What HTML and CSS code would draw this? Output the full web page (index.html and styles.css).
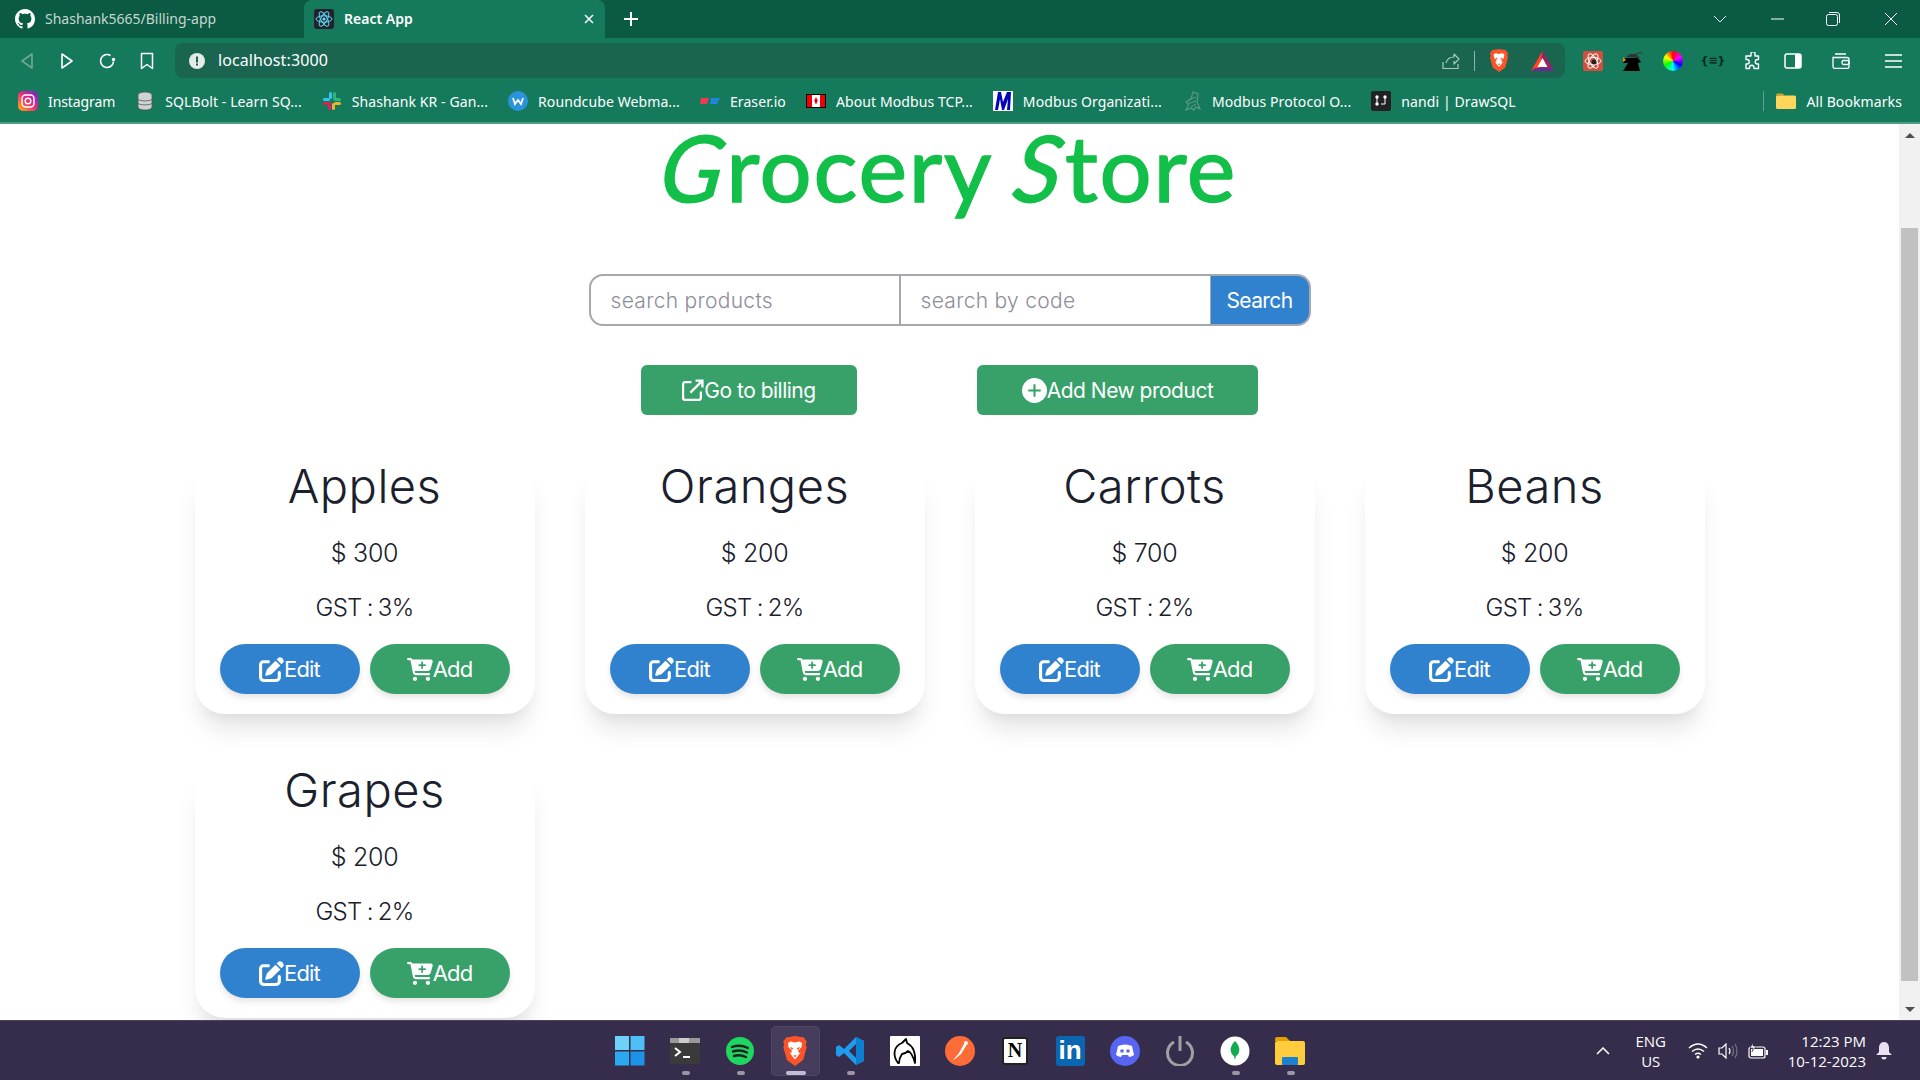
FILE: index.html
```html
<!DOCTYPE html>
<html lang="en">
<head>
    <meta charset="UTF-8">
    <title>React App</title>
    <link rel="stylesheet" href="styles.css">
</head>
<body>
    <svg class="defs" aria-hidden="true">
        <symbol id="i-edit" viewBox="0 0 512 512"><path fill="#fff" d="M471.6 21.7c-21.9-21.9-57.3-21.9-79.2 0L362.3 51.7l97.9 97.9 30.1-30.1c21.9-21.9 21.9-57.3 0-79.2L471.6 21.7zm-299.2 220c-6.1 6.1-10.8 13.6-13.5 21.9l-29.6 88.8c-2.9 8.6-.6 18.1 5.8 24.6s15.9 8.7 24.6 5.8l88.8-29.6c8.2-2.7 15.7-7.4 21.9-13.5L437.7 172.3 339.7 74.3 172.4 241.7zM96 64C43 64 0 107 0 160V416c0 53 43 96 96 96H352c53 0 96-43 96-96V320c0-17.7-14.3-32-32-32s-32 14.3-32 32v96c0 17.7-14.3 32-32 32H96c-17.7 0-32-14.3-32-32V160c0-17.7 14.3-32 32-32h96c17.7 0 32-14.3 32-32s-14.3-32-32-32H96z"/></symbol>
        <symbol id="i-cart" viewBox="0 0 576 512"><path fill="#fff" d="M0 24C0 10.7 10.7 0 24 0H69.5c22 0 41.5 12.8 50.6 32h411c26.3 0 45.5 25 38.6 50.4l-41 152.3c-8.5 31.4-37 53.3-69.5 53.3H170.7l5.4 28.5c2.2 11.3 12.1 19.5 23.6 19.5H488c13.3 0 24 10.7 24 24s-10.7 24-24 24H199.7c-34.6 0-64.3-24.6-70.7-58.5L77.4 54.5c-.7-3.8-4-6.5-7.9-6.5H24C10.7 48 0 37.3 0 24zM128 464a48 48 0 1 1 96 0 48 48 0 1 1 -96 0zm336-48a48 48 0 1 1 0 96 48 48 0 1 1 0-96zM252 160c0 11 9 20 20 20h44v44c0 11 9 20 20 20s20-9 20-20V180h44c11 0 20-9 20-20s-9-20-20-20H356V96c0-11-9-20-20-20s-20 9-20 20v44H272c-11 0-20 9-20 20z"/></symbol>
        <symbol id="i-brave" viewBox="0 0 24 28"><path fill="#fb542b" d="M12 0l5 1 3 .2 3 4-1 3 1 2-3.400 12.300L12 28l-7.600-5.500L1 10.200l1-2-1-3 3-4L7 1z"/><path fill="#fff" d="M12 6l4-.8 2.500 1.300-.5 4-3 3 .5 2.500 2-1-3 4-2.500 3-2.500-3-3-4 2 1 .5-2.500-3-3-.5-4L8 5.200z"/><path fill="#fb542b" d="M7.500 10l3 1.500L9 13zM16.500 10l-3 1.500L15 13zM10.500 18h3L12 20z"/></symbol>
    </svg>

    <div class="tabstrip">
        <div class="tab">
            <svg width="20" height="20" viewBox="0 0 16 16"><path fill="#fff" d="M8 0C3.580 0 0 3.580 0 8c0 3.540 2.290 6.530 5.470 7.590.4.070.55-.17.55-.38 0-.19-.01-.82-.01-1.490-2.010.37-2.530-.49-2.690-.94-.09-.23-.48-.94-.82-1.130-.28-.15-.68-.52-.01-.53.63-.01 1.080.58 1.230.82.72 1.210 1.870.87 2.330.66.070-.52.28-.87.51-1.070-1.780-.2-3.640-.89-3.640-3.950 0-.87.31-1.590.82-2.150-.08-.2-.36-1.020.08-2.120 0 0 .67-.21 2.200.82.64-.18 1.320-.27 2-.27.68 0 1.360.09 2 .27 1.530-1.040 2.200-.82 2.200-.82.44 1.100.16 1.920.08 2.120.51.56.82 1.270.82 2.150 0 3.070-1.870 3.750-3.650 3.950.29.25.54.73.54 1.480 0 1.070-.01 1.930-.01 2.200 0 .21.15.46.55.38A8.013 8.013 0 0016 8c0-4.420-3.580-8-8-8z"/></svg>
            <span class="tab-title">Shashank5665/Billing-app</span>
        </div>
        <div class="tab tab-active">
            <svg width="20" height="20" viewBox="0 0 20 20"><rect width="20" height="20" rx="3" fill="#20232a"/><g fill="none" stroke="#61dafb" stroke-width="1"><ellipse cx="10" cy="10" rx="8" ry="3.200"/><ellipse cx="10" cy="10" rx="8" ry="3.200" transform="rotate(60 10 10)"/><ellipse cx="10" cy="10" rx="8" ry="3.200" transform="rotate(120 10 10)"/></g><circle cx="10" cy="10" r="1.600" fill="#61dafb"/></svg>
            <span class="tab-title">React App</span>
            <svg class="tab-close" width="10" height="10" viewBox="0 0 10 10"><path d="M1 1l8 8M9 1l-8 8" stroke="#fff" stroke-width="1.500"/></svg>
        </div>
        <svg class="new-tab" width="16" height="16" viewBox="0 0 16 16"><path d="M8 1v14M1 8h14" stroke="#fff" stroke-width="2"/></svg>
        <div class="window-btns">
            <svg class="win-list" width="14" height="8" viewBox="0 0 14 8"><path d="M1 1l6 6 6-6" fill="none" stroke="#dfe" stroke-width="1"/></svg>
            <svg class="win-min" width="13" height="2" viewBox="0 0 13 2"><path d="M0 1h13" stroke="#fff" stroke-width="1"/></svg>
            <svg class="win-max" width="14" height="14" viewBox="0 0 14 14"><rect x=".5" y="2.500" width="11" height="11" rx="2" fill="none" stroke="#fff"/><path d="M3 .5h8a2.500 2.500 0 0 1 2.500 2.500v8" fill="none" stroke="#fff"/></svg>
            <svg class="win-close" width="14" height="14" viewBox="0 0 14 14"><path d="M1 1l12 12M13 1L1 13" stroke="#fff" stroke-width="1"/></svg>
        </div>
    </div>

    <div class="toolbar">
        <span class="nav-btn"><svg width="14" height="18" viewBox="0 0 14 18"><path d="M12 2L2 9l10 7z" fill="none" stroke="#6fa895" stroke-width="1.600" stroke-linejoin="round"/></svg></span>
        <span class="nav-btn"><svg width="14" height="18" viewBox="0 0 14 18"><path d="M2 2l10 7-10 7z" fill="none" stroke="#fff" stroke-width="1.600" stroke-linejoin="round"/></svg></span>
        <span class="nav-btn"><svg width="18" height="18" viewBox="0 0 18 18"><path d="M12.500 3.500A6.500 6.500 0 1 0 15.500 9.500" fill="none" stroke="#fff" stroke-width="1.600"/><circle cx="15.500" cy="7.500" r="1.700" fill="#fff"/></svg></span>
        <span class="nav-btn"><svg width="14" height="18" viewBox="0 0 14 18"><path d="M1.500 1.500h11v15L7 12.500l-5.500 4z" fill="none" stroke="#fff" stroke-width="1.500" stroke-linejoin="round"/></svg></span>
        <div class="urlbar">
            <svg width="16" height="16" viewBox="0 0 16 16"><circle cx="8" cy="8" r="8" fill="#e4ebe8"/><rect x="7" y="3.500" width="2" height="6" fill="#196550"/><rect x="7" y="10.500" width="2" height="2" fill="#196550"/></svg>
            <span class="url">localhost:3000</span>
            <svg class="url-share" width="18" height="18" viewBox="0 0 18 18"><path d="M1 10v6.500h15V12M4 11c1-4 4-6 8-6V2l5 5-5 5V9" fill="none" stroke="#a9c8bc" stroke-width="1.200" stroke-linejoin="round"/></svg>
            <span class="url-sep"></span>
            <svg class="url-brave" width="20" height="23"><use href="#i-brave"/></svg>
            <svg class="url-bat" width="23" height="20" viewBox="0 0 23 20"><path d="M11.500 0L23 20H0z" fill="#9e1f63"/><path d="M11.500 0L0 20h8z" fill="#ff4724"/><path d="M0 20h23l-4-3H4z" fill="#662d91"/><path d="M11.500 7l5 9h-10z" fill="#fff"/></svg>
        </div>
        <div class="tool-icons">
            <span class="nav-btn"><svg width="20" height="20" viewBox="0 0 20 20"><rect width="20" height="20" rx="2" fill="#d0503f"/><g fill="none" stroke="#fff" stroke-width="1"><ellipse cx="10" cy="10" rx="8" ry="3.500"/><ellipse cx="10" cy="10" rx="8" ry="3.500" transform="rotate(60 10 10)"/><ellipse cx="10" cy="10" rx="8" ry="3.500" transform="rotate(120 10 10)"/></g><circle cx="11" cy="11" r="2.500" fill="#222"/></svg></span>
            <span class="nav-btn"><svg width="22" height="20" viewBox="0 0 22 20"><path d="M3 7h13l3 4-3 1 2 8H1l5-8H1z" fill="#000"/><path d="M1 6l3 3-3 2z" fill="#e98a15"/><path d="M4 6l4-3h6l4 4z" fill="#333"/><path d="M14 3q3-2 6-1" fill="none" stroke="#333"/></svg></span>
            <span class="nav-btn"><span class="color-wheel"></span></span>
            <span class="nav-btn"><span class="ext-brace">{≡}</span></span>
            <span class="nav-btn"><svg width="18" height="18" viewBox="0 0 18 18"><path d="M7 1.500a2 2 0 0 1 4 0.500V4h3.500v3.500h-1a2.200 2.200 0 0 0 0 4.500h1v4.500H10v-1a2.200 2.200 0 0 0-4.500 0v1H2V12h1a2.200 2.200 0 0 0 0-4.500H2V4h5z" fill="none" stroke="#fff" stroke-width="1.400" stroke-linejoin="round"/></svg></span>
            <span class="nav-btn"><svg width="18" height="16" viewBox="0 0 18 16"><rect x="1" y="1" width="16" height="14" rx="2" fill="none" stroke="#fff" stroke-width="1.500"/><rect x="11" y="1" width="6" height="14" fill="#fff"/></svg></span>
            <span class="nav-btn nav-wallet"><svg width="18" height="16" viewBox="0 0 18 16"><path d="M3 1h11M1 4.500h14a2 2 0 0 1 2 2v7a2 2 0 0 1-2 2H3a2 2 0 0 1-2-2z" fill="none" stroke="#fff" stroke-width="1.300"/><rect x="10" y="7.500" width="7" height="4" rx="1.500" fill="none" stroke="#fff" stroke-width="1.300"/></svg></span>
            <span class="nav-btn nav-menu"><svg width="17" height="14" viewBox="0 0 17 14"><path d="M0 1h17M0 7h17M0 13h17" stroke="#fff" stroke-width="1.500"/></svg></span>
        </div>
    </div>

    <div class="bookmarks">
        <span class="bookmark bookmark-first">
            <svg width="20" height="20" viewBox="0 0 20 20"><defs><linearGradient id="ig" x1="0" y1="1" x2="1" y2="0"><stop offset="0" stop-color="#fdb900"/><stop offset=".5" stop-color="#ee2a7b"/><stop offset="1" stop-color="#6228d7"/></linearGradient></defs><rect width="20" height="20" rx="5" fill="url(#ig)"/><rect x="4" y="4" width="12" height="12" rx="3.500" fill="none" stroke="#fff" stroke-width="1.400"/><circle cx="10" cy="10" r="2.800" fill="none" stroke="#fff" stroke-width="1.400"/></svg>
            Instagram</span>
        <span class="bookmark">
            <svg width="20" height="20" viewBox="0 0 20 20"><path d="M3 4c0-4 14-4 14 0v12c0 4-14 4-14 0z" fill="#cfd3d6" stroke="#555" stroke-width=".8"/><path d="M3 8c0 2.500 14 2.500 14 0M3 12c0 2.500 14 2.500 14 0" fill="none" stroke="#555" stroke-width=".8"/></svg>
            SQLBolt - Learn SQ...</span>
        <span class="bookmark">
            <svg width="20" height="20" viewBox="0 0 20 20"><rect x="7" y="1" width="3" height="7" rx="1.500" fill="#36c5f0"/><rect x="1" y="7" width="7" height="3" rx="1.500" fill="#36c5f0"/><rect x="11" y="1" width="3" height="8" rx="1.500" fill="#2eb67d"/><rect x="12" y="7" width="7" height="3" rx="1.500" fill="#2eb67d"/><rect x="12" y="11" width="7" height="3" rx="1.500" fill="#ecb22e"/><rect x="10" y="12" width="3" height="7" rx="1.500" fill="#ecb22e"/><rect x="1" y="11" width="8" height="3" rx="1.500" fill="#e01e5a"/><rect x="6" y="12" width="3" height="7" rx="1.500" fill="#e01e5a"/></svg>
            Shashank KR - Gan...</span>
        <span class="bookmark">
            <svg width="20" height="20" viewBox="0 0 20 20"><circle cx="10" cy="10" r="10" fill="#2a93d9"/><path d="M5 7l2 6 3-4 3 4 2-6" fill="none" stroke="#fff" stroke-width="1.800"/></svg>
            Roundcube Webma...</span>
        <span class="bookmark">
            <svg width="20" height="20" viewBox="0 0 20 20"><path d="M1 7h8l-2 6H0z" fill="#ef3b4f"/><path d="M11 7h9l-3 6h-7z" fill="#1f86e0"/></svg>
            Eraser.io</span>
        <span class="bookmark">
            <svg width="20" height="20" viewBox="0 0 20 20"><rect y="3" width="20" height="14" fill="#000"/><rect x="1" y="4" width="18" height="12" fill="#e00"/><rect x="6" y="4" width="8" height="12" fill="#fff"/><path d="M10 6l2 4-1 .5v2H9v-2L8 10z" fill="#e00"/></svg>
            About Modbus TCP...</span>
        <span class="bookmark">
            <svg width="20" height="20" viewBox="0 0 20 20"><rect width="20" height="20" fill="#fff"/><path d="M2 19L5 1h3l2 10 4-10h4l-1 18h-3l1-11-4 11H9L7 8 5 19z" fill="#0505b8"/></svg>
            Modbus Organizati...</span>
        <span class="bookmark">
            <svg width="20" height="20" viewBox="0 0 20 20"><path d="M11 1l5 2-1 8 3 7-4-2-2 3-3-2-5 2 3-6-3-2 5-3z" fill="none" stroke="#5a9a85" stroke-width="1.200"/><path d="M6 9l8-3M5 13l9-3M9 16l5-3" stroke="#5a9a85"/></svg>
            Modbus Protocol O...</span>
        <span class="bookmark">
            <svg width="20" height="20" viewBox="0 0 20 20"><rect width="20" height="20" rx="2" fill="#222"/><circle cx="6" cy="6" r="1.700" fill="#fff"/><circle cx="14" cy="6" r="1.700" fill="#fff"/><circle cx="6" cy="13" r="1.700" fill="#fff"/><path d="M14 7v6h-4" fill="none" stroke="#fff"/><path d="M6 7v5" stroke="#fff"/></svg>
            nandi | DrawSQL</span>
        <span class="bookmark-sep"></span>
        <span class="bookmark">
            <svg width="20" height="16" viewBox="0 0 20 16"><path d="M0 2a1.500 1.500 0 0 1 1.500-1.500h5L9 2.500H0z" fill="#d49f22"/><rect y="2.500" width="20" height="13.500" rx="1.500" fill="#ffd65c"/></svg>
            All Bookmarks</span>
    </div>

    <div class="viewport">
        <main class="page">
            <h1 class="store-title"><span class="swash">G</span>rocery <span class="swash">S</span>tore</h1>

            <form class="search-row">
                <input class="search-input search-first" type="text" placeholder="search products">
                <input class="search-input" type="text" placeholder="search by code">
                <button class="search-btn" type="button">Search</button>
            </form>

            <div class="actions">
                <button class="action-btn action-billing" type="button">
                    <svg width="22" height="22" viewBox="0 0 21 21"><path d="M9 3H3a2 2 0 0 0-2 2v13a2 2 0 0 0 2 2h13a2 2 0 0 0 2-2v-6" fill="none" stroke="#fff" stroke-width="2.200"/><path d="M8 13L19 2M13 1.500h6.500V8" fill="none" stroke="#fff" stroke-width="2.200"/></svg>Go to billing</button>
                <button class="action-btn action-add" type="button">
                    <svg width="25" height="25" viewBox="0 0 24 24"><circle cx="12" cy="12" r="12" fill="#fff"/><path d="M12 6v12M6 12h12" stroke="#38a169" stroke-width="2"/></svg>Add New product</button>
            </div>

            <section class="cards">
                <article class="card">
                    <h2 class="card-name">Apples</h2>
                    <p class="card-price">$ 300</p>
                    <p class="card-gst">GST : 3%</p>
                    <div class="card-btns">
                        <button class="pill pill-edit" type="button"><svg class="i-edit"><use href="#i-edit"/></svg>Edit</button>
                        <button class="pill pill-add" type="button"><svg class="i-cart"><use href="#i-cart"/></svg>Add</button>
                    </div>
                </article>
                <article class="card">
                    <h2 class="card-name">Oranges</h2>
                    <p class="card-price">$ 200</p>
                    <p class="card-gst">GST : 2%</p>
                    <div class="card-btns">
                        <button class="pill pill-edit" type="button"><svg class="i-edit"><use href="#i-edit"/></svg>Edit</button>
                        <button class="pill pill-add" type="button"><svg class="i-cart"><use href="#i-cart"/></svg>Add</button>
                    </div>
                </article>
                <article class="card">
                    <h2 class="card-name">Carrots</h2>
                    <p class="card-price">$ 700</p>
                    <p class="card-gst">GST : 2%</p>
                    <div class="card-btns">
                        <button class="pill pill-edit" type="button"><svg class="i-edit"><use href="#i-edit"/></svg>Edit</button>
                        <button class="pill pill-add" type="button"><svg class="i-cart"><use href="#i-cart"/></svg>Add</button>
                    </div>
                </article>
                <article class="card">
                    <h2 class="card-name">Beans</h2>
                    <p class="card-price">$ 200</p>
                    <p class="card-gst">GST : 3%</p>
                    <div class="card-btns">
                        <button class="pill pill-edit" type="button"><svg class="i-edit"><use href="#i-edit"/></svg>Edit</button>
                        <button class="pill pill-add" type="button"><svg class="i-cart"><use href="#i-cart"/></svg>Add</button>
                    </div>
                </article>
                <article class="card">
                    <h2 class="card-name">Grapes</h2>
                    <p class="card-price">$ 200</p>
                    <p class="card-gst">GST : 2%</p>
                    <div class="card-btns">
                        <button class="pill pill-edit" type="button"><svg class="i-edit"><use href="#i-edit"/></svg>Edit</button>
                        <button class="pill pill-add" type="button"><svg class="i-cart"><use href="#i-cart"/></svg>Add</button>
                    </div>
                </article>
            </section>
        </main>

        <div class="scrollbar">
            <span class="arrow-up"></span>
            <span class="thumb"></span>
            <span class="arrow-down"></span>
        </div>
    </div>

    <footer class="taskbar">
        <div></div>
        <div class="task-icons">
            <span class="task"><svg width="30" height="30" viewBox="0 0 30 30"><rect width="14" height="14" fill="#6fd0fa"/><rect x="15.500" width="14" height="14" fill="#4ec0f7"/><rect y="15.500" width="14" height="14" fill="#2aa8f0"/><rect x="15.500" y="15.500" width="14" height="14" fill="#1c93e8"/></svg></span>
            <span class="task task-open"><svg width="30" height="26" viewBox="0 0 30 26"><rect width="30" height="26" rx="2" fill="#3a3a3a"/><rect width="30" height="5" fill="#999"/><rect x="9" width="10" height="5" fill="#ccc"/><path d="M5 10l5 4-5 4" fill="none" stroke="#fff" stroke-width="2"/><path d="M13 19h7" stroke="#fff" stroke-width="2"/></svg></span>
            <span class="task task-open"><svg width="28" height="28" viewBox="0 0 28 28"><circle cx="14" cy="14" r="14" fill="#1ed760"/><path d="M6 10q8-3 16 1M7 14.500q7-2.500 14 1M8 19q6-2 12 1" fill="none" stroke="#222" stroke-width="2.400" stroke-linecap="round"/></svg></span>
            <span class="task task-active"><svg width="26" height="30"><use href="#i-brave"/></svg></span>
            <span class="task task-open"><svg width="30" height="30" viewBox="0 0 30 30"><path d="M21 1l8 4v20l-8 4L9 17l-5 4-3-2v-8l3-2 5 4z" fill="#1f9cf0"/><path d="M21 1l8 4v20l-8 4z" fill="#0d7fd0"/><path d="M21 8v14l-7-7z" fill="#352d4b"/></svg></span>
            <span class="task"><svg width="30" height="30" viewBox="0 0 30 30"><rect width="30" height="30" rx="1" fill="#fff"/><path d="M8 27c-6-8-4-17 4-20l4-4 1 4c6 3 9 9 8 20-2-7-4-11-7-12-2 2-5 3-6 3-2 3-3 6-3 9z" fill="none" stroke="#000" stroke-width="1.800" stroke-linejoin="round"/></svg></span>
            <span class="task"><svg width="30" height="30" viewBox="0 0 30 30"><circle cx="15" cy="15" r="15" fill="#ff6c37"/><path d="M8 24l6-7 5-9 3-2-1 4-5 8-6 5z" fill="#fff"/><circle cx="21" cy="7" r="2" fill="#fff"/></svg></span>
            <span class="task"><span class="notion">N</span></span>
            <span class="task"><span class="linkedin">in</span></span>
            <span class="task"><svg width="30" height="30" viewBox="0 0 30 30"><circle cx="15" cy="15" r="15" fill="#5865f2"/><path d="M8 10q7-3 14 0l2 9q-3 2-5 2l-1-2h-6l-1 2q-2 0-5-2z" fill="#fff"/><circle cx="12" cy="15" r="1.800" fill="#5865f2"/><circle cx="18" cy="15" r="1.800" fill="#5865f2"/></svg></span>
            <span class="task"><svg width="30" height="30" viewBox="0 0 30 30"><path d="M9 6a12.500 12.500 0 1 0 12 0" fill="none" stroke="#a0a0a0" stroke-width="3"/><path d="M15 0v15" stroke="#a0a0a0" stroke-width="3"/></svg></span>
            <span class="task task-open"><svg width="30" height="30" viewBox="0 0 30 30"><circle cx="15" cy="15" r="14.500" fill="#fff"/><path d="M15 5c4 4 5 8 4 11-1 3-3 4-3 4l-1 4-1-4s-2-1-3-4c-1-3 0-7 4-11z" fill="#13aa52"/></svg></span>
            <span class="task task-open"><svg width="30" height="28" viewBox="0 0 30 28"><path d="M0 2a2 2 0 0 1 2-2h9l4 4H0z" fill="#e2a100"/><rect y="4" width="30" height="24" rx="2" fill="#ffcc3d"/><rect x="7" y="20" width="16" height="8" rx="1" fill="#1b80d0"/></svg></span>
        </div>
        <div class="tray">
            <svg width="14" height="8" viewBox="0 0 14 8"><path d="M1 7l6-6 6 6" fill="none" stroke="#fff" stroke-width="1.500"/></svg>
            <span class="tray-lang">ENG<br>US</span>
            <svg width="20" height="17" viewBox="0 0 20 17"><path d="M1 6q9-8 18 0M4 9.500q6-5 12 0M7 12.500q3-2.500 6 0" fill="none" stroke="#fff" stroke-width="1.400"/><circle cx="10" cy="15" r="1.600" fill="#fff"/></svg>
            <svg class="tray-icon" width="20" height="16" viewBox="0 0 20 16"><path d="M1 5h3l4-4v14l-4-4H1z" fill="none" stroke="#fff" stroke-width="1.200"/><path d="M11 5q2 3 0 6" fill="none" stroke="#fff" stroke-width="1.200"/><path d="M14 3q3 5 0 10M17 1q4 7 0 14" fill="none" stroke="#77718a" stroke-width="1.200"/></svg>
            <svg class="tray-icon" width="20" height="16" viewBox="0 0 20 16"><rect x="1" y="4" width="16" height="11" rx="2" fill="none" stroke="#fff" stroke-width="1.200"/><rect x="3" y="6" width="12" height="7" fill="#fff"/><rect x="18" y="7" width="2" height="5" fill="#fff"/><path d="M5 0L2 5h3l-1 4 4-6H5z" fill="#fff" stroke="#352d4b" stroke-width=".6"/></svg>
            <span class="tray-clock">12:23 PM<br>10-12-2023</span>
            <svg width="16" height="18" viewBox="0 0 16 18"><path d="M8 0c3.500 0 5 3 5 6v4l3 3H0l3-3V6c0-3 1.500-6 5-6z" fill="#e8e0f0"/><path d="M5.500 15h5a2.500 2.500 0 0 1-5 0z" fill="#e8e0f0"/></svg>
        </div>
    </footer>
</body>
</html>
```

FILE: styles.css
```css
* {
    box-sizing: border-box;
}

html, body {
    height: 100%;
}

body {
    margin: 0;
    height: 1080px;
    overflow: hidden;
    display: flex;
    flex-direction: column;
    font-family: 'Inter', 'Open Sans', sans-serif;
    color: #1a202c;
    background: #fff;
}

svg {
    display: block;
    flex-shrink: 0;
}

.defs {
    position: absolute;
    width: 0;
    height: 0;
}

/* browser chrome */
.tabstrip {
    height: 38px;
    flex-shrink: 0;
    display: flex;
    align-items: center;
    background: #0b5a43;
    font-family: 'Noto Sans', sans-serif;
    font-size: 14px;
}

.tab {
    width: 304px;
    height: 38px;
    padding-left: 15px;
    display: flex;
    align-items: center;
    gap: 10px;
    color: #c4d8d0;
}

.tab-title {
    margin-bottom: 2px;
}

.tab-active {
    width: 301px;
    padding-left: 10px;
    background: #157a5c;
    border-radius: 8px 8px 0 0;
    color: #fff;
    font-weight: 600;
}

.tab-close {
    margin-left: auto;
    margin-right: 11px;
}

.new-tab {
    margin-left: 18px;
}

.window-btns {
    margin-left: auto;
    display: flex;
    align-items: center;
}

.win-list {
    margin-right: 44px;
}

.win-min {
    margin-right: 42px;
}

.win-max {
    margin-right: 44px;
}

.win-close {
    margin-right: 22px;
}

.toolbar {
    height: 47px;
    flex-shrink: 0;
    padding: 5px 0 7px 7px;
    display: flex;
    align-items: center;
    background: #157a5c;
}

.nav-btn {
    width: 40px;
    height: 35px;
    display: flex;
    align-items: center;
    justify-content: center;
}

.urlbar {
    width: 1390px;
    height: 35px;
    margin-left: 8px;
    padding-left: 14px;
    display: flex;
    align-items: center;
    background: #196550;
    border-radius: 8px;
}

.url {
    margin-left: 13px;
    margin-bottom: 2px;
    font-family: 'Noto Sans', sans-serif;
    font-size: 16px;
    letter-spacing: 0.1px;
    color: #fff;
}

.url-share {
    margin-left: auto;
}

.url-sep {
    width: 1px;
    height: 20px;
    margin: 0 14px;
    background: #8fb5a8;
}

.url-bat {
    margin: 0 11px 0 22px;
}

.tool-icons {
    margin-left: 8px;
    display: flex;
    align-items: center;
}

.nav-wallet {
    margin-left: 8px;
}

.nav-menu {
    margin-left: 12px;
}

.color-wheel {
    width: 20px;
    height: 20px;
    border-radius: 50%;
    background: conic-gradient(#f00, #f0f, #00f, #0ff, #0f0, #ff0, #f00);
}

.ext-brace {
    font-family: 'DejaVu Sans', sans-serif;
    font-size: 11px;
    font-weight: bold;
    color: #03281d;
}

.bookmarks {
    height: 39px;
    flex-shrink: 0;
    padding: 0 18px 5px;
    display: flex;
    align-items: center;
    gap: 20px;
    background: #157a5c;
    border-bottom: 2px solid #4d9b84;
    font-family: 'Noto Sans', sans-serif;
    font-size: 14px;
    letter-spacing: 0.1px;
    color: #fff;
}

.bookmark {
    display: flex;
    align-items: center;
    gap: 10px;
    white-space: nowrap;
}

.bookmark-first {
    letter-spacing: -0.1px;
}

.bookmark-sep {
    width: 1px;
    height: 20px;
    margin-left: auto;
    margin-right: -8px;
    background: #5da38e;
}

/* page */
.viewport {
    flex: 1;
    min-height: 0;
    display: flex;
}

.page {
    flex: 1;
    min-width: 0;
    padding-top: 6px;
    display: flex;
    flex-direction: column;
    align-items: center;
}

.store-title {
    margin: 0 0 44px;
    height: 100px;
    font-family: 'Lato', sans-serif;
    font-size: 92px;
    font-weight: 400;
    line-height: 74px;
    letter-spacing: 1.8px;
    white-space: nowrap;
    color: #12bf48;
    -webkit-text-stroke: 1.5px #12bf48;
}

.swash {
    display: inline-block;
    font-style: italic;
    transform: skewX(-8deg);
}

.search-row {
    display: flex;
    width: 722px;
    height: 52px;
    margin-bottom: 39px;
}

.search-input {
    width: 311px;
    height: 52px;
    padding: 0 20px;
    border: 2px solid #a7a7b0;
    border-right-width: 1px;
    border-left-width: 1px;
    background: #fff;
    outline: none;
    font-family: 'Inter', sans-serif;
    font-size: 21px;
    font-weight: 300;
    letter-spacing: 0.3px;
}

.search-first {
    border-left-width: 2px;
    border-radius: 14px 0 0 14px;
}

.search-input::placeholder {
    color: #8d8d9b;
}

.search-btn {
    flex: 1;
    border: 2px solid #a7a7b0;
    border-left: none;
    border-radius: 0 14px 14px 0;
    background: #3182ce;
    color: #fff;
    font-family: 'Inter', sans-serif;
    font-size: 21px;
    font-weight: 400;
    letter-spacing: -0.6px;
}

.actions {
    display: flex;
    gap: 120px;
    height: 50px;
    margin-bottom: 45px;
}

.action-btn {
    height: 50px;
    display: flex;
    align-items: center;
    justify-content: center;
    border: none;
    border-radius: 6px;
    background: #38a169;
    color: #fff;
    font-family: 'Inter', sans-serif;
    font-size: 21px;
    font-weight: 400;
    letter-spacing: -0.5px;
}

.action-billing {
    width: 216px;
}

.action-add {
    width: 281px;
}

.cards {
    display: grid;
    grid-template-columns: repeat(4, 340px);
    gap: 50px;
}

.card {
    height: 254px;
    padding: 0 25px 20px;
    border-radius: 30px;
    background: #fff;
    box-shadow: 0 20px 25px -5px rgba(0, 0, 0, 0.1), 0 10px 10px -5px rgba(0, 0, 0, 0.04);
    text-align: center;
}

.card-name {
    margin: 0;
    height: 52px;
    font-size: 47px;
    font-weight: 300;
    line-height: 52px;
    letter-spacing: 0.5px;
}

.card-price {
    margin: 23px 0 0;
    font-size: 25px;
    font-weight: 300;
    line-height: 36px;
    letter-spacing: -0.3px;
}

.card-gst {
    margin: 19px 0 0;
    font-size: 24px;
    font-weight: 300;
    line-height: 36px;
    letter-spacing: -0.7px;
    word-spacing: -1px;
}

.card-btns {
    margin-top: 18px;
    display: flex;
    gap: 10px;
}

.pill {
    width: 140px;
    height: 50px;
    display: flex;
    align-items: center;
    justify-content: center;
    border: none;
    border-radius: 25px;
    color: #fff;
    font-family: 'Inter', sans-serif;
    font-size: 22px;
    font-weight: 400;
    letter-spacing: -0.8px;
    box-shadow: 0 4px 6px rgba(0, 0, 0, 0.1);
}

.pill-edit {
    background: #3182ce;
}

.pill-add {
    background: #38a169;
}

.i-edit {
    width: 25px;
    height: 25px;
}

.i-cart {
    width: 26px;
    height: 23px;
}

.scrollbar {
    width: 21px;
    display: flex;
    flex-direction: column;
    align-items: center;
    background: #f1f1f1;
}

.arrow-up,
.arrow-down {
    width: 0;
    height: 0;
    border-left: 5px solid transparent;
    border-right: 5px solid transparent;
}

.arrow-up {
    margin: 9px 0 90px;
    border-bottom: 5px solid #505050;
}

.thumb {
    width: 17px;
    height: 753px;
    background: #c1c1c1;
}

.arrow-down {
    margin-top: 26px;
    border-top: 5px solid #505050;
}

/* windows taskbar */
.taskbar {
    height: 60px;
    flex-shrink: 0;
    display: grid;
    grid-template-columns: 1fr auto 1fr;
    align-items: center;
    background: #352d4b;
    border-top: 1px solid #4a4360;
    font-family: 'Open Sans', sans-serif;
    font-size: 15px;
    color: #fff;
}

.task-icons {
    display: flex;
}

.task {
    position: relative;
    width: 55px;
    height: 50px;
    display: flex;
    align-items: center;
    justify-content: center;
}

.task-open::after,
.task-active::after {
    content: '';
    position: absolute;
    bottom: 1px;
    left: 24px;
    width: 8px;
    height: 4px;
    border-radius: 2px;
    background: #9a95a8;
}

.task-active {
    background: #453d5b;
    border-radius: 5px;
    width: 49px;
    margin: 0 3px;
    box-shadow: inset 0 0 0 1px #4f4766;
}

.task-active::after {
    left: 15px;
    width: 20px;
    background: #c5bcd8;
}

.notion {
    width: 26px;
    height: 28px;
    display: flex;
    align-items: center;
    justify-content: center;
    background: #fff;
    border: 2px solid #222;
    border-radius: 3px;
    font-family: 'Liberation Serif', serif;
    font-size: 20px;
    font-weight: bold;
    color: #000;
}

.linkedin {
    width: 29px;
    height: 30px;
    display: flex;
    align-items: center;
    justify-content: center;
    background: #0a66b0;
    border-radius: 3px;
    font-family: 'Liberation Sans', sans-serif;
    font-size: 26px;
    font-weight: bold;
    color: #fff;
}

.tray {
    display: flex;
    align-items: center;
    justify-content: flex-end;
    padding-right: 28px;
}

.tray-lang {
    width: 40px;
    margin: 0 17px 0 21px;
    text-align: center;
    line-height: 20px;
}

.tray-icon {
    margin-left: 10px;
}

.tray-clock {
    margin: 0 10px 0 20px;
    text-align: right;
    line-height: 20px;
    white-space: nowrap;
}
```
